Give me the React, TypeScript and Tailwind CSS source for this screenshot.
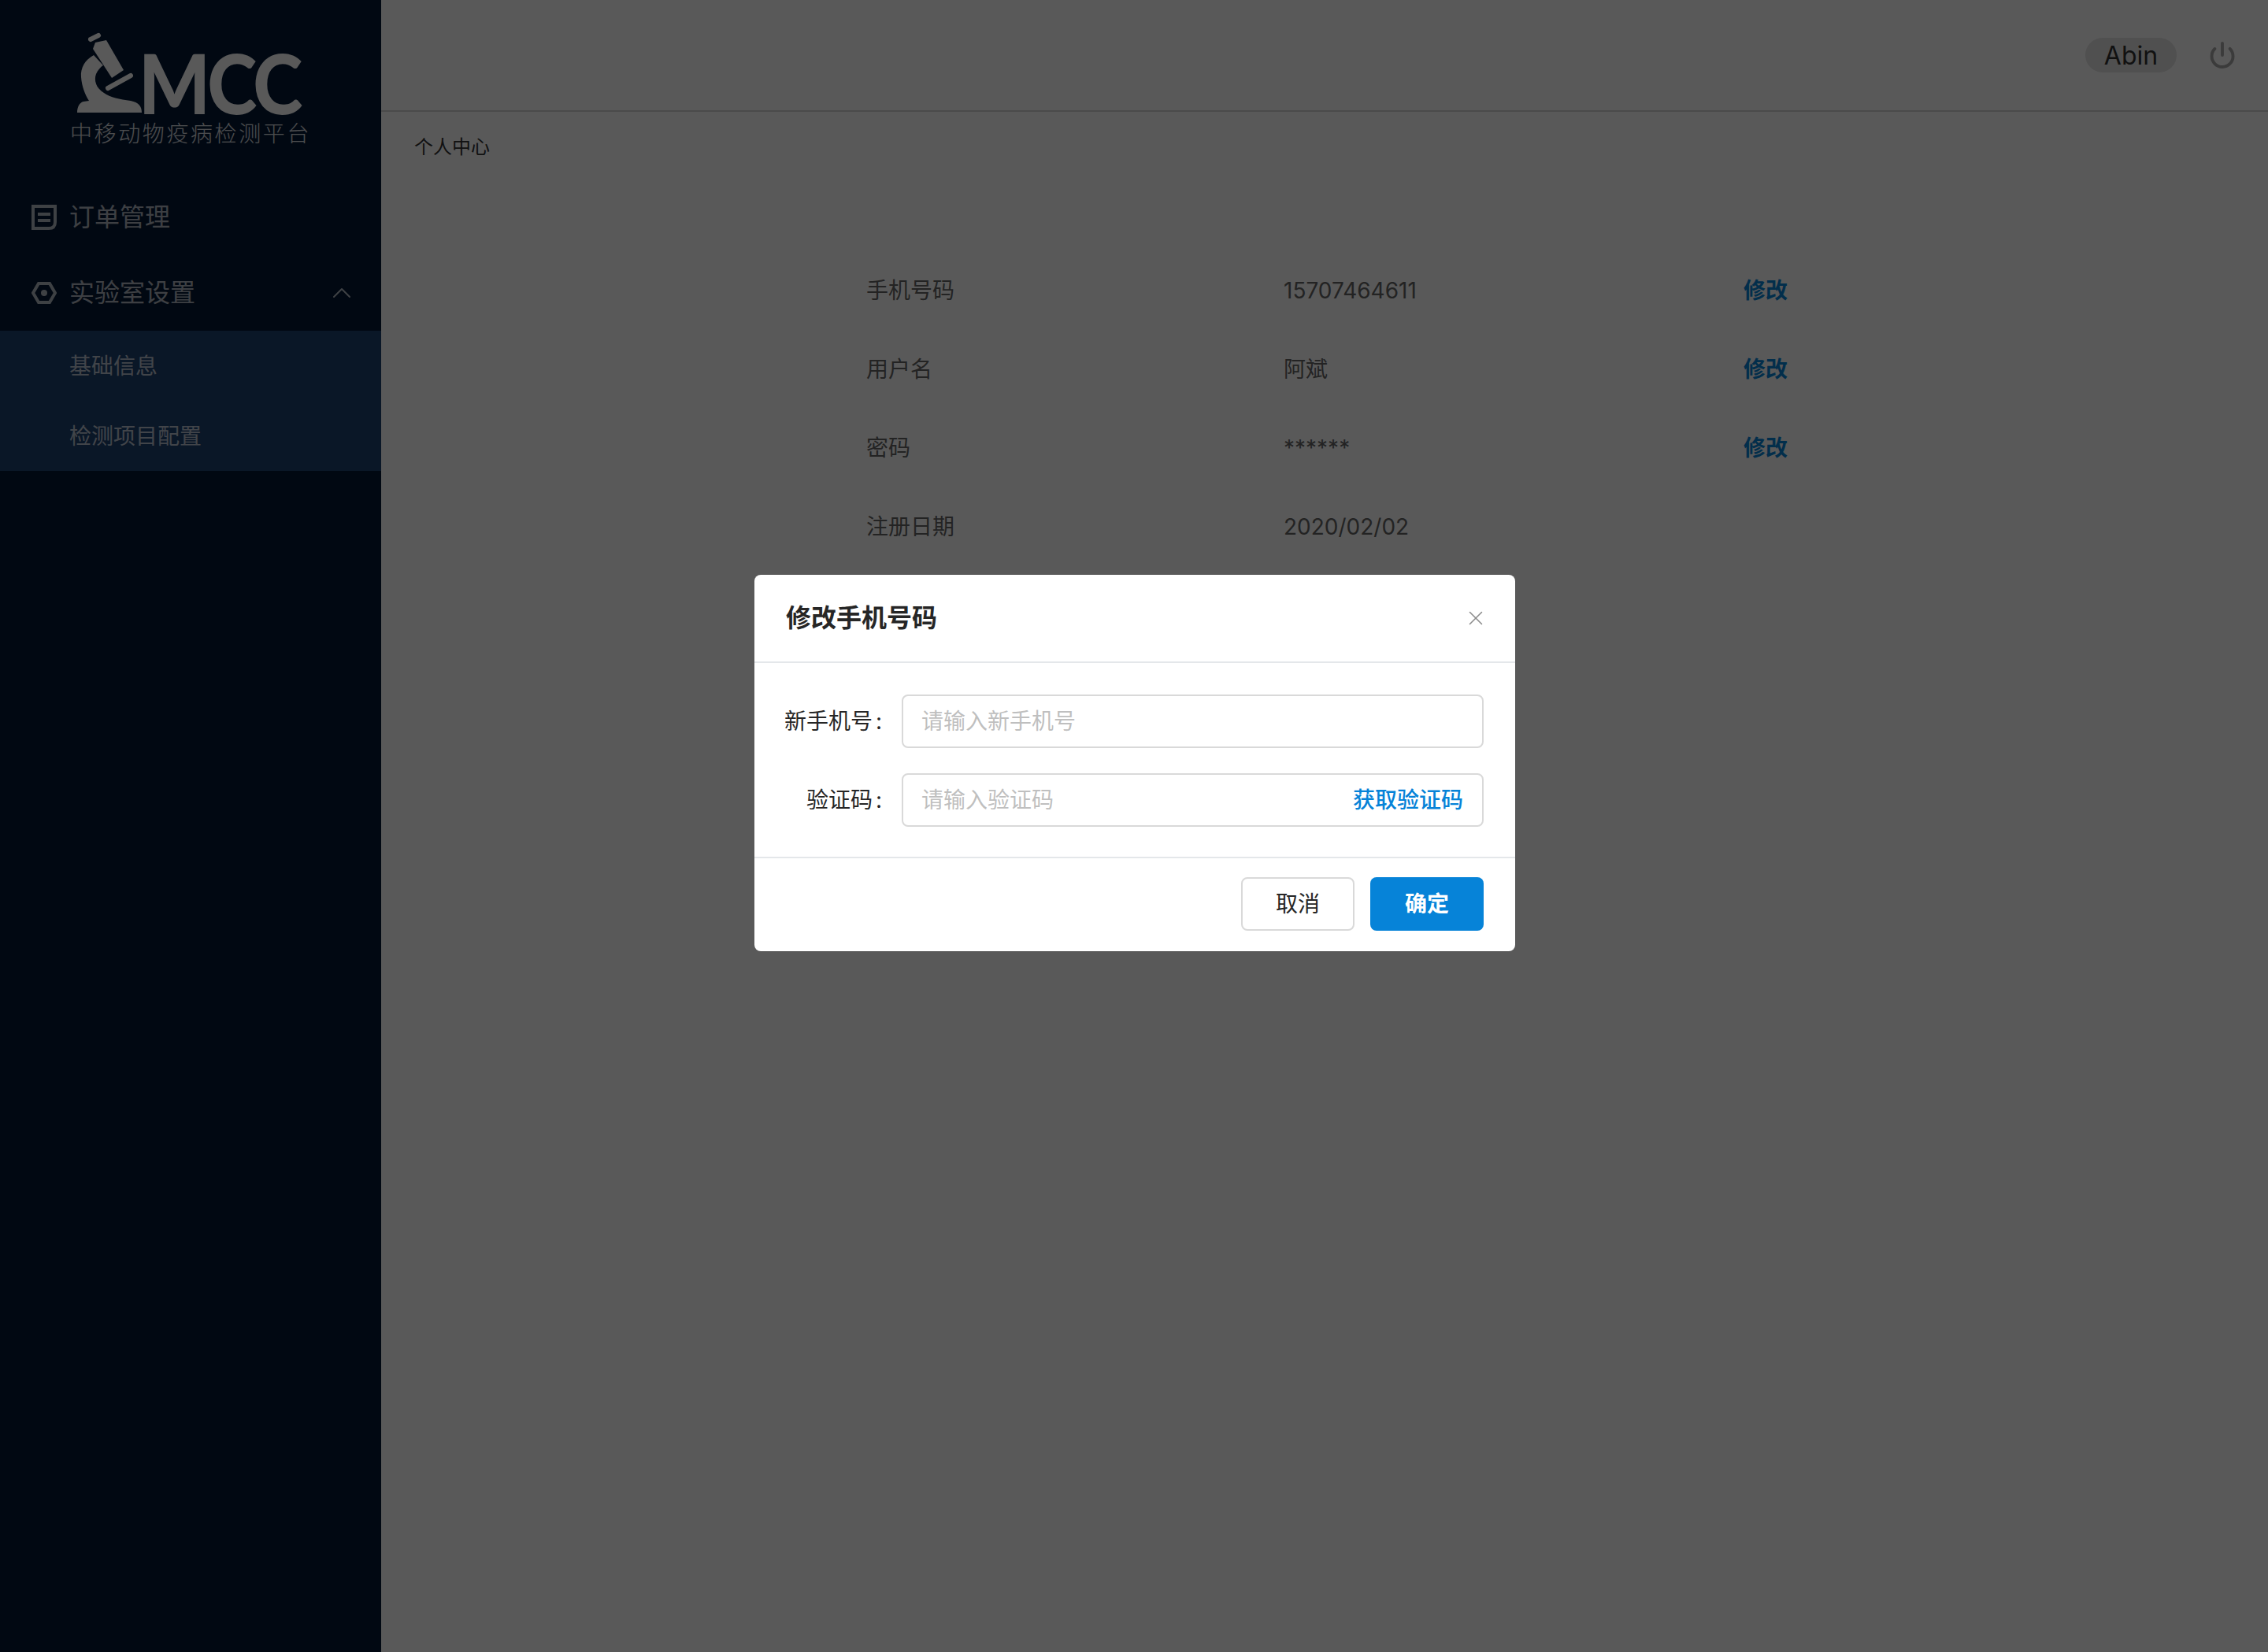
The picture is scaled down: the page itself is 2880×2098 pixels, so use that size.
import { ChevronUp, Power, X } from "lucide-react";

const font = "font-['Inter','Noto_Sans_CJK_SC',sans-serif]";

const profileRows = [
  { label: "手机号码", value: "15707464611", editable: true },
  { label: "用户名", value: "阿斌", editable: true },
  { label: "密码", value: "******", editable: true },
  { label: "注册日期", value: "2020/02/02", editable: false },
];

function Logo() {
  return (
    <div className="flex flex-col items-center h-[227px] pt-[41px]">
      <div className="flex items-end h-[102px] w-[290px] pl-[1px]">
        <svg width="84" height="102" viewBox="98 41 84 102" fill="#fff" className="shrink-0">
          <path d="M115 50 L125 45" stroke="#fff" strokeWidth="6" strokeLinecap="round" />
          <path d="M118 62 L121 54 L135 51 L157 89 L142 99 Z" />
          <path d="M137 112 L166 96" stroke="#fff" strokeWidth="6" strokeLinecap="round" />
          <path d="M119 70 C108 76 102 86 103 98 C104 110 108 120 113 128 L106 129 C101 130 98 136 98 143 L180 143 C180 135 176 130 166 128 C152 126 140 124 132 118 C122 112 119 102 122 94 C124 89 128 85 131 83 Z" />
        </svg>
        <span className="inline-block origin-left scale-x-[0.92] font-['Lato',sans-serif] font-black text-white text-[104px] leading-[76px] tracking-[-4px] -ml-[6px]">
          MCC
        </span>
      </div>
      <div className="mt-[11px] text-[28px] leading-[32px] tracking-[2.6px] font-light text-white/85 whitespace-nowrap">
        中移动物疫病检测平台
      </div>
    </div>
  );
}

function Sidebar() {
  return (
    <aside className="w-[484px] shrink-0 bg-[#031734] text-white/70">
      <Logo />
      <div className="flex items-center h-[97px] pl-[40px] text-[32px]">
        <svg width="32" height="32" viewBox="0 0 32 32" fill="none" stroke="currentColor" strokeWidth="4" className="mr-[16px]">
          <path d="M2 2 H30 V22 Q30 30 22 30 H2 Z" />
          <path d="M8 12 H24 M8 20 H24" />
        </svg>
        订单管理
      </div>
      <div className="flex items-center h-[96px] pl-[40px] pr-[30px] text-[32px]">
        <svg width="32" height="28" viewBox="0 0 32 28" fill="none" stroke="currentColor" strokeWidth="4" className="mr-[16px]">
          <path d="M9 2 H23 L30 14 L23 26 H9 L2 14 Z" />
          <circle cx="16" cy="14" r="4" fill="currentColor" stroke="none" />
        </svg>
        <span className="flex-1">实验室设置</span>
        <ChevronUp size={40} strokeWidth={1.2} />
      </div>
      <div className="bg-[#1f426f] text-[28px]">
        <div className="flex items-center h-[89px] pl-[88px] pt-[1px]">基础信息</div>
        <div className="flex items-center h-[89px] pl-[88px]">检测项目配置</div>
      </div>
    </aside>
  );
}

function ProfileRow({ label, value, editable }: { label: string; value: string; editable: boolean }) {
  return (
    <div className="flex items-center h-[100px] text-[28px] text-[#666]">
      <div className="w-[530px]">{label}</div>
      <div className="w-[584px]">{value}</div>
      {editable && <div className="text-[#0683d8] font-semibold">修改</div>}
    </div>
  );
}

function Field({ label, placeholder, action }: { label: string; placeholder: string; action?: string }) {
  return (
    <div className="flex items-center h-[68px]">
      <label className="w-[162px] text-right text-[28px] text-[#262626] shrink-0">
        {label}
        <span className="ml-[4px]">:</span>
      </label>
      <div className="ml-[25px] flex-1 flex items-center h-full border-2 border-[#d9d9d9] rounded-[8px] pl-[23px] pr-[24px]">
        <input
          placeholder={placeholder}
          className="flex-1 min-w-0 text-[28px] outline-none placeholder:text-[#bfbfbf]"
        />
        {action && <span className="text-[28px] text-[#0683d8] font-medium">{action}</span>}
      </div>
    </div>
  );
}

function PhoneDialog() {
  return (
    <div className="absolute inset-0 bg-black/65 flex justify-center pt-[730px] pl-[2px]">
      <div className="w-[966px] h-[478px] bg-white rounded-[8px] flex flex-col">
        <div className="flex items-center justify-between h-[112px] border-b-2 border-[#e4e7ea] pl-[40px] pr-[40px]">
          <span className="text-[32px] font-semibold text-[#262626]">修改手机号码</span>
          <X size={30} strokeWidth={1.25} className="text-[#8c8c8c] -mr-[5px]" />
        </div>
        <div className="flex flex-col gap-[32px] h-[248px] pt-[40px] pr-[40px] border-b-2 border-[#e4e7ea]">
          <Field label="新手机号" placeholder="请输入新手机号" />
          <Field label="验证码" placeholder="请输入验证码" action="获取验证码" />
        </div>
        <div className="flex justify-end gap-[20px] pt-[24px] px-[40px]">
          <button className="w-[144px] h-[68px] border-2 border-[#d9d9d9] rounded-[8px] text-[28px] text-[#262626]">
            取消
          </button>
          <button className="w-[144px] h-[68px] bg-[#0683d8] rounded-[8px] text-[28px] font-semibold text-white">
            确定
          </button>
        </div>
      </div>
    </div>
  );
}

export default function App() {
  return (
    <div className={`relative flex w-[2880px] h-[2098px] bg-white overflow-hidden ${font}`}>
      <Sidebar />
      <main className="flex-1">
        <header className="flex items-center justify-end h-[142px] border-b-2 border-[#d8d8d8] pr-[40px]">
          <div className="flex items-center justify-center w-[116px] h-[44px] pt-[1px] rounded-full bg-[#e5e5e5] text-[32px] text-[#333]">
            Abin
          </div>
          <Power size={36} strokeWidth={2.6} className="ml-[40px] text-[#aaa]" />
        </header>
        <div className="pl-[42px] pt-[29px] text-[24px] leading-[32px] text-[#333]">个人中心</div>
        <div className="pl-[616px] pt-[116px]">
          {profileRows.map((row) => (
            <ProfileRow key={row.label} {...row} />
          ))}
        </div>
      </main>
      <PhoneDialog />
    </div>
  );
}
